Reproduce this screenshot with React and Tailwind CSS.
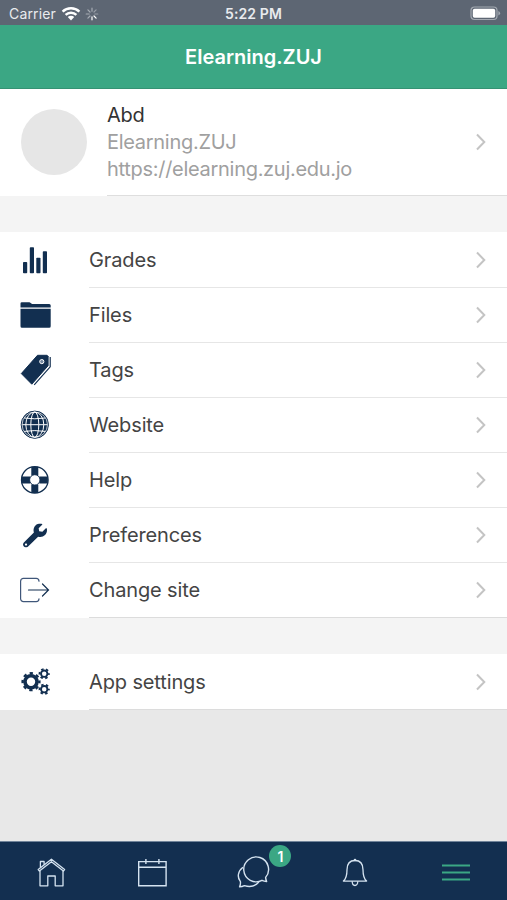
import React from 'react';
import { FaWrench } from 'react-icons/fa';

function Icon({ children }) {
  return (
    <svg viewBox="0 0 36 36" className="h-9 w-9 shrink-0" fill="none">
      {children}
    </svg>
  );
}

function GradesIcon() {
  return (
    <Icon>
      <g fill="#122f50">
        <rect x="6" y="21" width="4.2" height="11.2" rx="0.8" />
        <rect x="12.8" y="6.2" width="4.2" height="26" rx="0.8" />
        <rect x="19.3" y="16.8" width="4.2" height="15.4" rx="0.8" />
        <rect x="25.8" y="10.2" width="4.2" height="22" rx="0.8" />
      </g>
    </Icon>
  );
}

function FilesIcon() {
  return (
    <Icon>
      <g fill="#122f50">
        <path d="M3.5 11.6V7.6a1.3 1.3 0 0 1 1.3-1.3h7.4c1.3 0 1.6 1.6 3 1.6h17a1.5 1.5 0 0 1 1.5 1.5v2.2z" />
        <path d="M3.5 12.7h30.2v17.5a1.5 1.5 0 0 1-1.5 1.5H5a1.5 1.5 0 0 1-1.5-1.5z" />
      </g>
    </Icon>
  );
}

function TagsIcon() {
  return (
    <Icon>
      <path d="M20.5 4.3h9.6l1 1v9.4L14.8 33.2 4.3 22.6z" fill="#122f50" stroke="#122f50" strokeLinejoin="round" />
      <path d="M33.2 6v9.8L17.2 33.8" stroke="#122f50" strokeWidth="1.2" />
      <circle cx="24.8" cy="10.6" r="2.1" fill="#7488a0" stroke="#fff" strokeWidth="1" />
    </Icon>
  );
}

function WebsiteIcon() {
  return (
    <Icon>
      <circle cx="17.8" cy="18.7" r="13.6" fill="#122f50" stroke="#122f50" />
      <g stroke="#fff" strokeWidth="1">
        <circle cx="17.8" cy="18.7" r="12.7" strokeWidth="0.7" />
        <ellipse cx="17.8" cy="18.7" rx="9" ry="12.6" />
        <ellipse cx="17.8" cy="18.7" rx="4" ry="12.6" />
        <path d="M5.2 18.7h25.2M7.2 12q10.600 1.600 21.200 0M7.2 25.400q10.600-1.600 21.200 0" />
      </g>
    </Icon>
  );
}

function HelpIcon() {
  return (
    <Icon>
      <circle cx="17.8" cy="18.9" r="13.3" stroke="#122f50" strokeWidth="1.3" />
      <path d="M17.8 5.8v8.600M17.8 23.400V32M4.700 18.900h8.600M22.300 18.900h8.600" stroke="#122f50" strokeWidth="7" />
      <circle cx="17.8" cy="18.9" r="5.2" fill="#fff" stroke="#122f50" />
    </Icon>
  );
}

function PreferencesIcon() {
  return (
    <Icon>
      <FaWrench x="6" y="7.5" width="24" height="24" size={24} color="#122f50" />
    </Icon>
  );
}

function ChangeSiteIcon() {
  return (
    <Icon>
      <g stroke="#40577a" strokeWidth="1.2" strokeLinecap="round">
        <path d="M22 10.2c0-1.8-1-2.8-2.8-2.8H6.4a2.8 2.8 0 0 0-2.8 2.8v17.6a2.8 2.8 0 0 0 2.8 2.8h12.8c1.8 0 2.8-1 2.8-2.8" />
        <path d="M11.5 19h20M25.5 13l6 6-6 6" stroke="#122f50" />
      </g>
    </Icon>
  );
}

// one big cog with eight teeth and two small ones with six
function SettingsIcon() {
  return (
    <Icon>
      <g stroke="#122f50">
        <circle cx="14" cy="18.7" r="6" strokeWidth="3.6" />
        <circle cx="14" cy="18.7" r="8.4" strokeWidth="2.4" strokeDasharray="3.3 3.3" strokeDashoffset="1.65" />
        <circle cx="27.2" cy="10.700" r="3.2" strokeWidth="1.900" />
        <circle cx="27.2" cy="10.700" r="4.700" strokeWidth="1.800" strokeDasharray="2.460 2.460" strokeDashoffset="1.230" />
        <circle cx="27.2" cy="26.200" r="3.2" strokeWidth="1.900" />
        <circle cx="27.2" cy="26.200" r="4.700" strokeWidth="1.800" strokeDasharray="2.460 2.460" strokeDashoffset="1.230" />
      </g>
    </Icon>
  );
}

function Chevron() {
  return (
    <svg viewBox="0 0 12 18" className="mr-5 h-[18px] w-3 shrink-0" fill="none">
      <path d="M2 1.5 9.3 9 2 16.5" stroke="#c4c4c4" strokeWidth="2" />
    </svg>
  );
}

function MenuRow({ icon, label, last }) {
  return (
    <div className="flex h-[55px] bg-white pl-[17px]">
      <div className="mr-9 pt-2">{icon}</div>
      <div className={`flex flex-1 items-center justify-between border-b ${last ? 'border-[#dcdcdc]' : 'border-[#e6e6e6]'}`}>
        <span className="text-[20px] tracking-[-0.13px] text-[#444]">{label}</span>
        <Chevron />
      </div>
    </div>
  );
}

const items = [
  { label: 'Grades', icon: <GradesIcon /> },
  { label: 'Files', icon: <FilesIcon /> },
  { label: 'Tags', icon: <TagsIcon /> },
  { label: 'Website', icon: <WebsiteIcon /> },
  { label: 'Help', icon: <HelpIcon /> },
  { label: 'Preferences', icon: <PreferencesIcon /> },
  { label: 'Change site', icon: <ChangeSiteIcon /> }
];

function StatusBar() {
  return (
    <div className="grid h-[25px] grid-cols-3 items-center bg-[#5d6673] pt-[2px] text-[14px] text-[#e9ebee]">
      <div className="flex items-center pl-[9px]">
        <span className="tracking-[0.15px]">Carrier</span>
        <svg viewBox="0 0 20 16" className="ml-[5px] h-4 w-5" fill="none">
          <g stroke="#fff" strokeWidth="2.4">
            <path d="M1.6 5.7a12 12 0 0 1 16.8 0" />
            <path d="M4.6 8.9a7.7 7.7 0 0 1 10.8 0" />
          </g>
          <path d="M10 14.5 6.8 11.1a4.6 4.6 0 0 1 6.4 0z" fill="#fff" />
        </svg>
        <svg viewBox="0 0 14 14" className="ml-1 h-3.5 w-3.5" stroke="#cfd3d8" strokeWidth="1.2" strokeLinecap="round">
          <path d="M7 1.2v3M2.9 2.9 5 5M1.2 7h3M2.9 11.1 5 9" opacity="0.65" />
          <path d="M7 9.8v3M9 9l2.1 2.1" stroke="#fff" />
          <path d="M9.8 7h3M9 5l2.1-2.1" opacity="0.5" />
        </svg>
      </div>
      <div className="text-center font-semibold tracking-[0.1px]">5:22 PM</div>
      <div className="flex justify-end pr-[6px]">
        <svg viewBox="0 0 31 15" className="h-[15px] w-[31px]">
          <rect x="1" y="1" width="26" height="12.5" rx="3.5" fill="none" stroke="#a3a9b1" strokeWidth="1.2" />
          <rect x="2.8" y="2.8" width="22.4" height="9" rx="1.8" fill="#fff" />
          <path d="M28.4 5v4.6q1.7-.8 1.7-2.3t-1.7-2.3" fill="#a3a9b1" />
        </svg>
      </div>
    </div>
  );
}

function TabBar() {
  return (
    <nav className="grid h-[59px] grid-cols-5 justify-items-center border-t border-[#71849a] bg-[#132f50] pt-3 text-[#d5e3f0]">
      <Icon>
        <g stroke="currentColor" strokeWidth="1.3" strokeLinejoin="round">
          <path d="M18.4 5.2 5.2 15.6l1.2 1.5L18.4 7.7l12 9.4 1.2-1.5z" />
          <path d="M7 16.8v15h7.8V22h7.4v9.8H30v-15M7.4 13.8V7.5h3.7v3.3" />
        </g>
      </Icon>
      <Icon>
        <g stroke="currentColor" strokeWidth="1.4">
          <path d="M4.7 7.6h27.4v24.2H4.7zM4.7 13.2h27.4M11.9 5v5M24.9 5v5" />
        </g>
      </Icon>
      <div className="relative">
        <Icon>
          <g stroke="currentColor" strokeWidth="1.4" strokeLinejoin="round">
            <path d="M30.6 23.4c.1 1.3.5 2.8 1 4.2-1.500-.2-3.100-.6-4.600-1.300A12.400 12.400 0 1 1 30.600 23.400z" />
            <path d="M8 13.300C3 17 1.800 23 5.400 27.600c.3 1.700-.1 3.600-.8 5.200 1.800 0 3.400-.5 4.800-1.200 5.400 1.700 11 .4 14.400-3.600" />
          </g>
        </Icon>
        <span className="absolute top-[-9px] left-[34px] flex size-[22px] items-center justify-center rounded-full bg-[#3ba784] text-[14px] font-semibold text-white">1</span>
      </div>
      <Icon>
        <g stroke="currentColor" strokeWidth="1.3" strokeLinejoin="round">
          <path d="M18 6.5c-5.6 0-8 4.2-8 9.2 0 6.8-1.2 9.3-3.6 11.4h23.2C27.2 25 26 22.5 26 15.7c0-5-2.4-9.2-8-9.2z" />
          <path d="M15.2 27.3c0 5.6 5.6 5.6 5.6 0" />
        </g>
        <circle cx="18" cy="6" r="1.3" fill="currentColor" />
      </Icon>
      <Icon>
        <path d="M4 11.5h28M4 18.5h28M4 25.5h28" stroke="#3ba784" strokeWidth="2" />
      </Icon>
    </nav>
  );
}

export default function App() {
  return (
    <div className="flex h-[900px] w-[507px] flex-col overflow-hidden bg-[#e8e8e8]" style={{ fontFamily: 'Inter, sans-serif' }}>
      <StatusBar />
      <header className="flex h-16 items-center justify-center border-b border-[#359273] bg-[#3ba784]">
        <h1 className="text-[20px] font-semibold text-white">Elearning.ZUJ</h1>
      </header>

      <section className="flex h-[107px] bg-white pl-[21px]">
        <div className="mt-5 mr-5 size-[66px] rounded-full bg-[#e6e6e6]" />
        <div className="flex flex-1 items-center justify-between border-b border-[#dedede]">
          <div className="text-[20px] leading-[27px] tracking-[-0.29px] text-[#a0a0a0]">
            <h2 className="leading-[28px] text-[#333]">Abd</h2>
            <p>Elearning.ZUJ</p>
            <p>https://elearning.zuj.edu.jo</p>
          </div>
          <Chevron />
        </div>
      </section>

      <div className="h-9 bg-[#f4f4f4]" />
      <section className="bg-white pt-px">
        {items.map((item, index) => (
          <MenuRow key={item.label} icon={item.icon} label={item.label} last={index === items.length - 1} />
        ))}
      </section>
      <div className="h-9 bg-[#f4f4f4]" />
      <section className="bg-white pt-px">
        <MenuRow icon={<SettingsIcon />} label="App settings" last />
      </section>

      <div className="flex-1" />
      <TabBar />
    </div>
  );
}
